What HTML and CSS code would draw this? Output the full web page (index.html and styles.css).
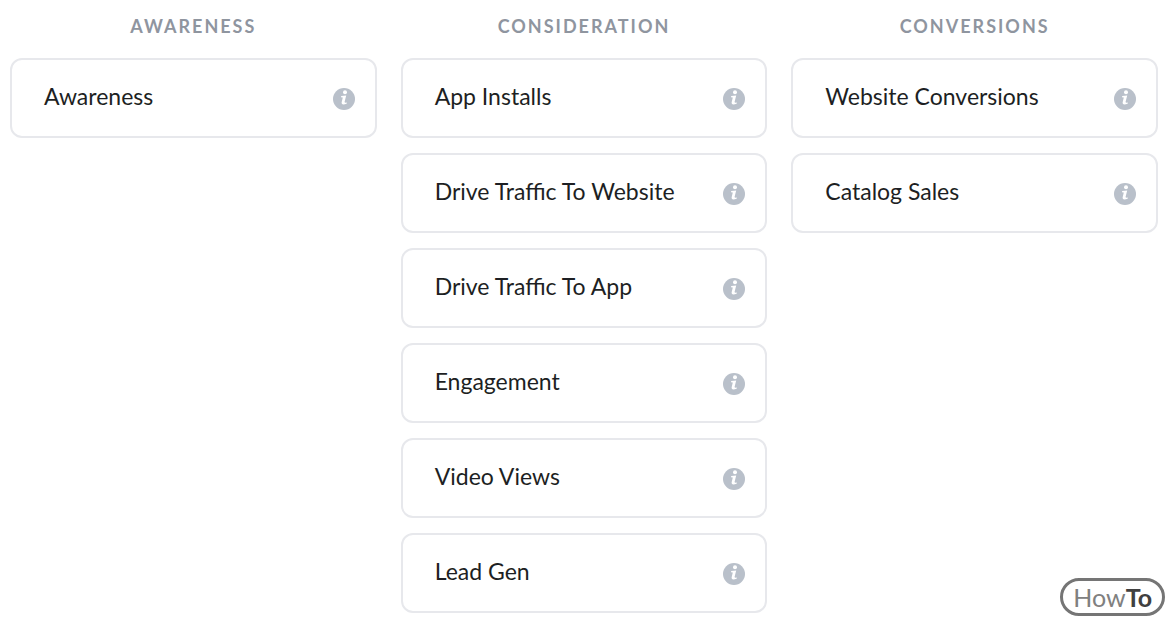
FILE: index.html
```
<!DOCTYPE html>
<html lang="en">
<head>
<meta charset="utf-8" />
<meta name="viewport" content="width=device-width, initial-scale=1" />
<title>Choose an objective</title>
<link rel="stylesheet" href="styles.css">
</head>
<body>
<!-- info icon, used by every button -->
<svg class="sprite" aria-hidden="true">
  <symbol id="info" viewBox="0 0 22 22">
    <circle cx="11" cy="11" r="11" fill="#b9c0ca"/>
    <circle cx="12" cy="4.2" r="2" fill="#fff"/>
    <path d="M8.2 7.9 L13.2 7.4 L11.6 13.8 Q11.4 15 13.9 14.5 L13.6 15.8 Q8.2 17.6 8.6 14.4 L9.8 9.4 L8 9.2 Z" fill="#fff"/>
  </symbol>
</svg>

<div id="objectives">
  <div class="column">
    <h2>AWARENESS</h2>
    <ul>
      <li><button type="button"><span>Awareness</span><svg class="info"><use href="#info"/></svg></button></li>
    </ul>
  </div>
  <div class="column">
    <h2>CONSIDERATION</h2>
    <ul>
      <li><button type="button"><span>App Installs</span><svg class="info"><use href="#info"/></svg></button></li>
      <li><button type="button"><span>Drive Traffic To Website</span><svg class="info"><use href="#info"/></svg></button></li>
      <li><button type="button"><span>Drive Traffic To App</span><svg class="info"><use href="#info"/></svg></button></li>
      <li><button type="button"><span>Engagement</span><svg class="info"><use href="#info"/></svg></button></li>
      <li><button type="button"><span>Video Views</span><svg class="info"><use href="#info"/></svg></button></li>
      <li><button type="button"><span>Lead Gen</span><svg class="info"><use href="#info"/></svg></button></li>
    </ul>
  </div>
  <div class="column">
    <h2>CONVERSIONS</h2>
    <ul>
      <li><button type="button"><span>Website Conversions</span><svg class="info"><use href="#info"/></svg></button></li>
      <li><button type="button"><span>Catalog Sales</span><svg class="info"><use href="#info"/></svg></button></li>
    </ul>
  </div>
</div>

<div id="watermark">How<b>To</b></div>
</body>
</html>
```

FILE: styles.css
```
body, ul, h2 { padding: 0; margin: 0; }
body { background: #fff; font-family: Lato, "Liberation Sans", sans-serif; color: #1d1f23; }
li { list-style: none; }
.sprite { display: none; }

#objectives { display: grid; grid-template-columns: repeat(3, 1fr); gap: 24px; padding: 14px 16px 10px 10px; }
.column h2 {
	margin-bottom: 20px;
	font-size: 18px;
	line-height: 24px;
	font-weight: bold;
	letter-spacing: 2px;
	text-align: center;
	color: #8f959f;
}
.column ul { display: flex; flex-direction: column; gap: 15px; }
.column button {
	display: flex;
	align-items: center;
	justify-content: space-between;
	width: 100%;
	min-height: 80px;
	padding: 2px 20px 0 32px;
	border: 2px solid #e7e8ec;
	border-radius: 12px;
	background: #fff;
	font: inherit;
	font-size: 23px;
	line-height: 28px;
	color: inherit;
	text-align: left;
	cursor: pointer;
}
.column button:hover { border-color: #b9c0ca; }
.column button span { padding-bottom: 6px; }
.info { flex: none; width: 22px; height: 22px; }

#watermark {
	position: absolute;
	right: 9px;
	bottom: 8px;
	padding: 0 10px;
	border: 3px solid #757575;
	border-radius: 19px;
	background: #fff;
	font-size: 25px;
	line-height: 32px;
	color: #808080;
}
#watermark b { font-weight: bold; color: #404040; }
```
